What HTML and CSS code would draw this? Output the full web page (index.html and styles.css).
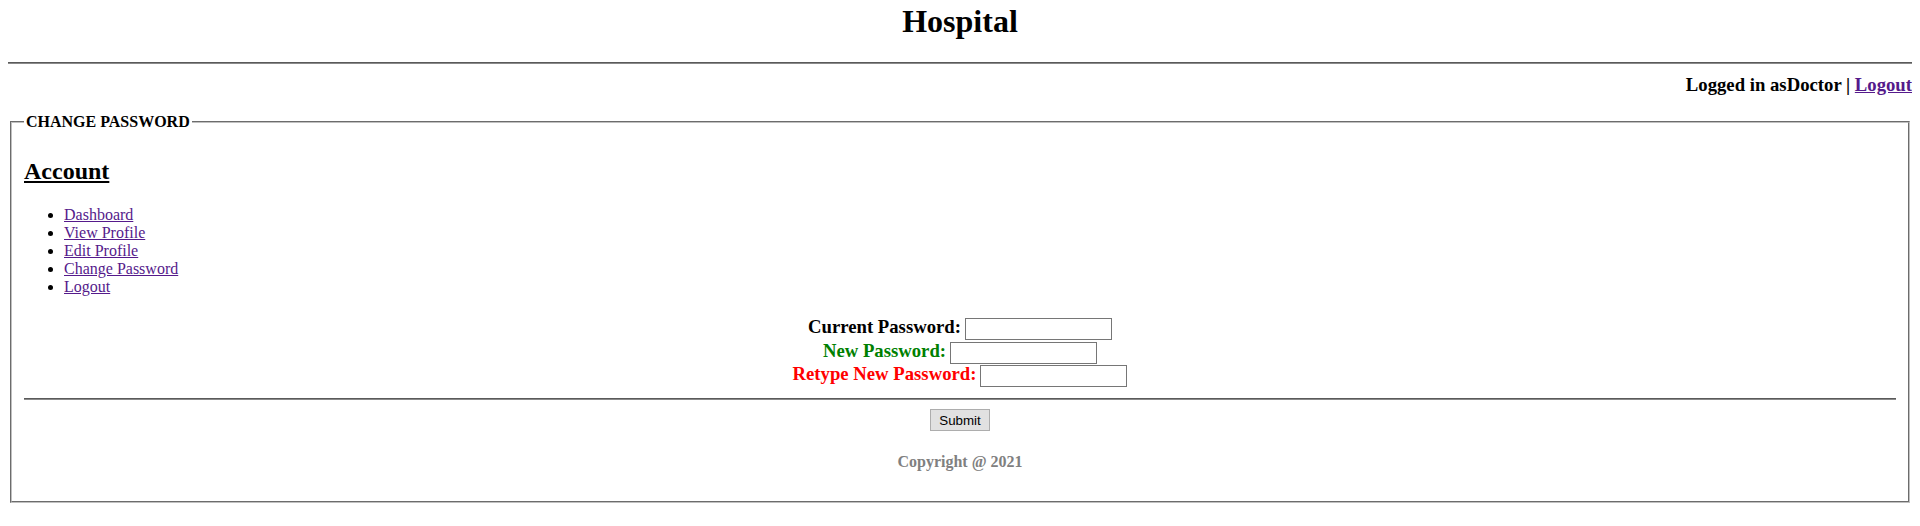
FILE: index.html
```html
<!DOCTYPE html>
<html lang="en">
<head>
<meta charset="utf-8">
<title>Hospital - Change Password</title>
<link rel="stylesheet" href="styles.css">
</head>
<body>
<header class="site-header">
  <h1 class="site-title">Hospital</h1>
  <hr class="rule header-rule">
  <div class="session">Logged in asDoctor | <a class="link" href="#">Logout</a></div>
</header>
<fieldset class="panel">
  <legend class="panel-legend">CHANGE PASSWORD</legend>
  <h2 class="account-title">Account</h2>
  <ul class="account-menu">
    <li><a class="link" href="#">Dashboard</a></li>
    <li><a class="link" href="#">View Profile</a></li>
    <li><a class="link" href="#">Edit Profile</a></li>
    <li><a class="link" href="#">Change Password</a></li>
    <li><a class="link" href="#">Logout</a></li>
  </ul>
  <form class="pw-form">
    <div class="pw-row"><label class="pw-label">Current Password:</label><input class="pw-input" type="password"></div>
    <div class="pw-row"><label class="pw-label pw-label-new">New Password:</label><input class="pw-input" type="password"></div>
    <div class="pw-row"><label class="pw-label pw-label-retype">Retype New Password:</label><input class="pw-input" type="password"></div>
    <hr class="rule form-rule">
    <div class="submit-row"><button class="submit-btn" type="submit">Submit</button></div>
  </form>
  <p class="copyright">Copyright @ 2021</p>
</fieldset>
</body>
</html>
```
FILE: styles.css
```css
body {
  margin: 8px;
  font-family: "Liberation Serif", "Times New Roman", serif;
  font-size: 16px;
  line-height: 18px;
  color: #000;
  background: #fff;
}

.site-header {
  display: block;
}

.site-title {
  margin: -5px 0 22px;
  font-size: 32px;
  line-height: 37px;
  font-weight: bold;
  text-align: center;
}

.rule {
  height: 0;
  border: 0;
  border-top: 1px solid #5a5a5a;
  border-bottom: 1px solid #8a8a8a;
}

.header-rule {
  margin: 0;
}

.session {
  margin: 10px 0 17px;
  font-size: 18.72px;
  line-height: 22px;
  font-weight: bold;
  text-align: right;
}

.link {
  color: #551a8b;
}

.panel {
  margin: 0 2px;
  padding: 6px 12px 10px;
  border: 2px groove #c0c0c0;
}

.panel-legend {
  padding: 0 2px;
  font-size: 16px;
  line-height: 18px;
  font-weight: bold;
}

.account-title {
  margin: 20px 0 21px;
  font-size: 24px;
  line-height: 28px;
  font-weight: bold;
  text-decoration: underline;
}

.account-menu {
  margin: 16px 0;
  padding-left: 40px;
  list-style: disc;
}

.account-menu li {
  line-height: 18px;
}

.pw-form {
  margin: 22px 0 0;
}

.pw-row {
  display: flex;
  justify-content: center;
  align-items: flex-start;
  gap: 4px;
  height: 23.5px;
}

.pw-label {
  font-size: 18.72px;
  line-height: 17px;
  font-weight: bold;
}

.pw-label-new {
  color: #008000;
}

.pw-label-retype {
  color: #ff0000;
}

.pw-input {
  box-sizing: border-box;
  width: 147px;
  height: 22px;
  margin: 0;
  padding: 1px 2px;
  border: 1px solid #767676;
  font-family: "Liberation Sans", Arial, sans-serif;
  font-size: 13.33px;
}

.form-rule {
  margin: 9px 0 0;
}

.submit-row {
  display: flex;
  justify-content: center;
  margin-top: 9.5px;
}

.submit-btn {
  box-sizing: border-box;
  width: 60px;
  height: 22px;
  margin: 0;
  padding: 1px 6px;
  border: 1px solid #adadad;
  background: #e1e1e1;
  color: #000;
  font-family: "Liberation Sans", Arial, sans-serif;
  font-size: 13.33px;
}

.copyright {
  margin: 21.5px 0 20.5px;
  text-align: center;
  font-weight: bold;
  color: #808080;
}
```
